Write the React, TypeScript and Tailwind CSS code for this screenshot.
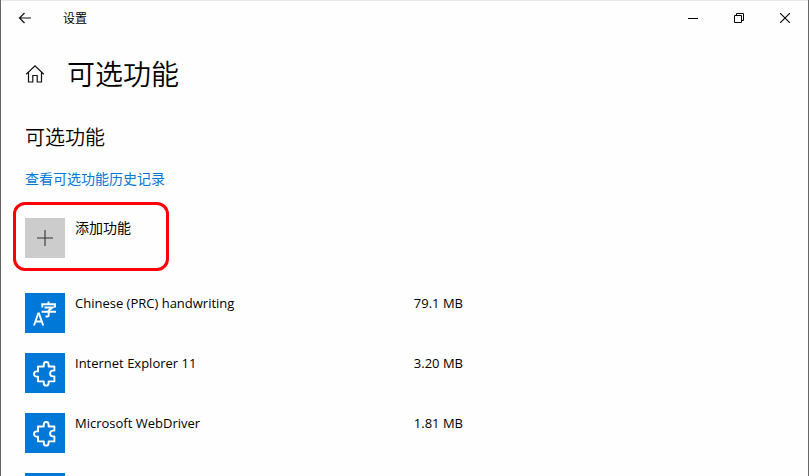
import type { ReactNode } from 'react';

type Feature = {
  name: string;
  size: string;
  icon: ReactNode;
};

function PuzzleIcon() {
  return (
    <svg viewBox="0 0 40 40" className="size-10" fill="none" stroke="#fff" strokeWidth="1.9" strokeLinejoin="round" aria-hidden="true">
      <path d="M13 13.5H18.8V11.4A2.4 2.4 0 0 1 23.6 11.4V13.5H29.4V17.6H28A2.7 2.7 0 0 0 28 23.4H29.4V28.4H23.6V30.2A2.4 2.4 0 0 1 18.8 30.2V28.4H13V23.6H11.6A2.6 2.6 0 0 1 11.6 18.4H13Z" />
    </svg>
  );
}

function LanguageIcon() {
  return (
    <svg viewBox="0 0 40 40" className="size-10" fill="none" stroke="#fff" strokeWidth="1.9" aria-hidden="true">
      <path d="M9 32.5L13.2 20.5H14L18.2 32.5M10.4 28.5H16.8" />
      <path d="M23.5 8.5V11M17.3 14.5V11.3H30V14.5M19.5 14.5H27.5L23.7 17.4V22.4Q23.7 23.5 22.5 23.5H20.5M16.5 18.8H31" />
    </svg>
  );
}

const features: Feature[] = [
  { name: 'Chinese (PRC) handwriting', size: '79.1 MB', icon: <LanguageIcon /> },
  { name: 'Internet Explorer 11', size: '3.20 MB', icon: <PuzzleIcon /> },
  { name: 'Microsoft WebDriver', size: '1.81 MB', icon: <PuzzleIcon /> },
  { name: '', size: '', icon: null },
];

function TitleBar() {
  return (
    <header className="flex h-[34px] items-center">
      <button type="button" aria-label="返回" className="flex h-8 w-12 items-center justify-center">
        <svg viewBox="0 0 14 12" className="h-3 w-3.5" fill="none" stroke="#111" strokeWidth="1.2" aria-hidden="true">
          <path d="M13 6H1.5M6.5 1L1.5 6L6.5 11" />
        </svg>
      </button>
      <span className="ml-3.5 pt-0.5 text-xs">设置</span>
      <div className="ml-auto flex">
        <button type="button" aria-label="最小化" className="flex h-8 w-[46px] items-center justify-center">
          <svg viewBox="0 0 10 10" className="size-2.5" stroke="#000" aria-hidden="true">
            <path d="M0 5.5H10" />
          </svg>
        </button>
        <button type="button" aria-label="还原" className="flex h-8 w-[46px] items-center justify-center">
          <svg viewBox="0 0 10 10" className="size-2.5" fill="none" stroke="#000" aria-hidden="true">
            <path d="M0.5 2.5H7.5V9.5H0.5ZM2.5 2.5V0.5H9.5V7.5H7.5" />
          </svg>
        </button>
        <button type="button" aria-label="关闭" className="flex h-8 w-[46px] items-center justify-center">
          <svg viewBox="0 0 10 10" className="size-2.5" stroke="#000" strokeWidth="1.1" aria-hidden="true">
            <path d="M0 0L10 10M10 0L0 10" />
          </svg>
        </button>
      </div>
    </header>
  );
}

export default function App() {
  return (
    <div className="h-screen overflow-hidden border-x border-[#666] bg-[#fefefe] font-['Open_Sans','Noto_Sans_CJK_SC',sans-serif] text-sm text-black">
      <div className="border-t border-[#e8e8e8]">
        <TitleBar />
        <main className="px-6">
          <div className="flex h-[78px] items-center gap-[22px]">
            <a href="#home" aria-label="主页">
              <svg viewBox="0 0 20 20" className="size-5" fill="none" stroke="#111" strokeWidth="1.2" aria-hidden="true">
                <path d="M1.2 10.2L10 1.8L18.8 10.2M3.5 8.2V18H7.8V11.5H12.2V18H16.5V8.2" />
              </svg>
            </a>
            <h1 className="text-[28px] font-[350] leading-9">可选功能</h1>
          </div>
          <h2 className="mt-[9px] text-xl font-[350] leading-8">可选功能</h2>
          <a href="#history" className="mt-[15px] block w-fit leading-5 text-[#0078d7]">
            查看可选功能历史记录
          </a>
          <button
            type="button"
            className="-ml-3 mt-[13px] flex h-[69px] w-[156px] items-start gap-2.5 rounded-xl border-3 border-[#fb0007] px-[9px] py-[13px] text-left"
          >
            <span className="flex size-10 items-center justify-center bg-[#ccc]">
              <svg viewBox="0 0 16 16" className="size-4" stroke="#333" strokeWidth="1.1" aria-hidden="true">
                <path d="M8 0V16M0 8H16" />
              </svg>
            </span>
            <span className="leading-5">添加功能</span>
          </button>
          <ul className="mt-[22px] flex max-w-[438px] flex-col gap-5 text-[13px]">
            {features.map((feature, index) => (
              <li key={index} className="flex gap-2.5">
                <span className="size-10 shrink-0 bg-[#0078d7]">{feature.icon}</span>
                <span className="leading-5">{feature.name}</span>
                <span className="ml-auto leading-5">{feature.size}</span>
              </li>
            ))}
          </ul>
        </main>
      </div>
    </div>
  );
}
